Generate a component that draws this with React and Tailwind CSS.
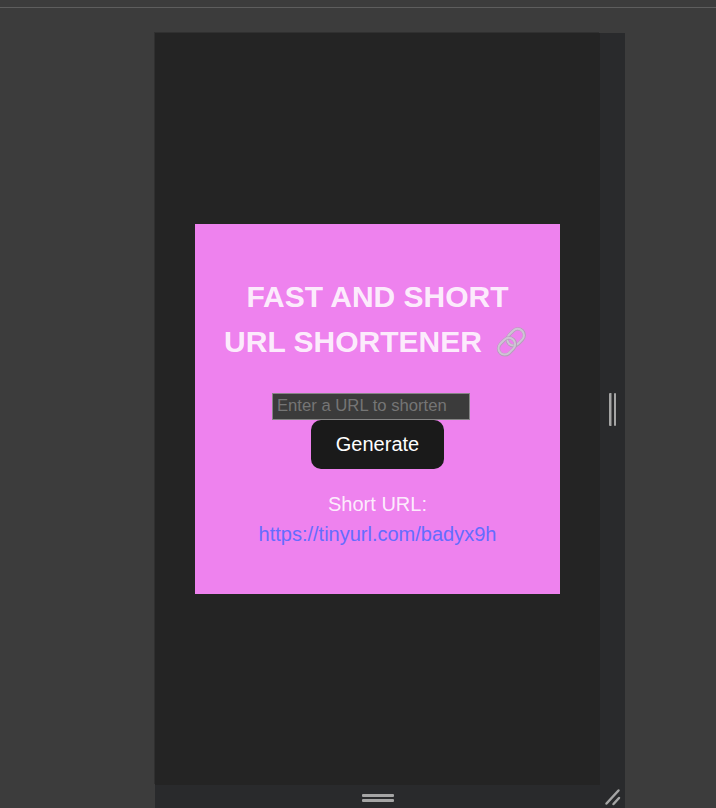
function LinkIcon() {
  return (
    <svg className="ml-[14px] h-[30px] w-[30px] shrink-0" viewBox="0 0 30 30" fill="none">
      <g transform="rotate(-45 19.8 10.4)">
        <rect x="10.4" y="4" width="18.8" height="12.8" rx="6.4" stroke="#b3a1b9" strokeWidth="3.2" />
        <rect x="10.6" y="3.8" width="18.4" height="12.6" rx="6.3" stroke="#d0c3d5" strokeWidth="2" />
      </g>
      <g transform="rotate(-45 11 19.4)">
        <rect x="1.6" y="13" width="18.8" height="12.8" rx="6.4" stroke="#b3a1b9" strokeWidth="3.2" />
        <rect x="1.8" y="12.8" width="18.4" height="12.6" rx="6.3" stroke="#d0c3d5" strokeWidth="2" />
      </g>
    </svg>
  );
}

function ShortenerCard() {
  return (
    <main className="flex h-[370px] w-[365px] flex-col items-center bg-[#ee82ee] pt-[50px] text-xl leading-[30px] text-white/[.87]">
      <h1 className="flex flex-col items-center text-[30px] font-bold leading-[45px]">
        <span className="whitespace-nowrap">FAST AND SHORT</span>
        <span className="flex items-center whitespace-nowrap pr-[5px]">
          URL SHORTENER
          <LinkIcon />
        </span>
      </h1>
      <input
        className="mr-[13px] mt-[29px] h-[27px] w-[198px] shrink-0 border border-[#858585] bg-[#3b3b3b] px-1 pb-0.5 text-[16.67px] leading-5 text-white placeholder:text-[#757575] placeholder:opacity-100"
        placeholder="Enter a URL to shorten"
      />
      <button className="h-[49px] w-[133px] shrink-0 rounded-[10px] bg-[#1a1a1a] pb-[2px] text-xl leading-[30px] text-white">
        Generate
      </button>
      <p className="mt-5 flex flex-col items-center">
        <span>Short URL:</span>
        <a className="font-normal text-[#646cff]" href="#short">https://tinyurl.com/badyx9h</a>
      </p>
    </main>
  );
}

export default function App() {
  return (
    <div className="flex h-[808px] w-[716px] flex-col overflow-hidden bg-[#3c3c3c] font-['Liberation_Sans',Arial,sans-serif]">
      <div className="h-[8px] shrink-0 border-b border-[#5e5e5e]" />
      <div className="ml-[155px] mt-[25px] grid h-[775px] w-[470px] shrink-0 grid-cols-[445px_25px] grid-rows-[752px_23px] bg-[#292a2c]">
        <div className="flex items-center justify-center bg-[#242424] shadow-[-1px_-1px_0_#303030]">
          <ShortenerCard />
        </div>
        <div className="flex items-center justify-center gap-[2px]">
          <span className="h-[33px] w-[3px] rounded-[1px] border-r border-[#666] bg-[#a5a5a5]" />
          <span className="h-[33px] w-[2px] rounded-[1px] bg-[#a5a5a5]" />
        </div>
        <div className="flex flex-col items-center justify-center gap-[2px] pl-[1px] pt-[2px]">
          <span className="h-[3px] w-[32px] rounded-[1px] bg-[#a5a5a5]" />
          <span className="h-[3px] w-[32px] rounded-[1px] bg-[#a5a5a5]" />
        </div>
        <svg className="h-[23px] w-[25px]" viewBox="0 0 25 23" fill="none" stroke="#a5a5a5" strokeWidth="2.5" strokeLinecap="round">
          <path d="M6.5 18.5 L18.5 5.5 M13.5 19 L19 13" />
        </svg>
      </div>
    </div>
  );
}
